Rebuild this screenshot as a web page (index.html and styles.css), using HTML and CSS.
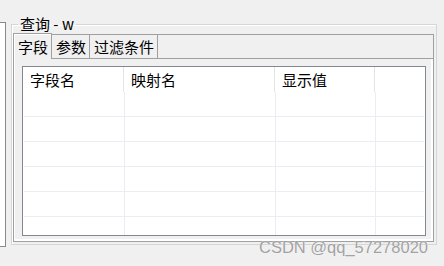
FILE: index.html
```html
<!DOCTYPE html>
<html lang="zh-CN">
<head>
    <meta charset="UTF-8">
    <title>查询 - w</title>
    <link rel="stylesheet" href="styles.css">
</head>
<body>
    <div class="window">
        <div class="side-panel"></div>

        <fieldset class="group">
            <legend>查询 - w</legend>

            <div class="tabs">
                <div class="tab-bar">
                    <div class="tab active">字段</div>
                    <div class="tab">参数</div>
                    <div class="tab">过滤条件</div>
                    <div class="tab-fill"></div>
                </div>

                <div class="tab-pane">
                    <div class="table">
                        <div class="table-head">
                            <div class="th">字段名</div>
                            <div class="th">映射名</div>
                            <div class="th">显示值</div>
                            <div class="th"></div>
                        </div>
                        <div class="table-body">
                            <div class="row"><div></div><div></div><div></div><div></div></div>
                            <div class="row"><div></div><div></div><div></div><div></div></div>
                            <div class="row"><div></div><div></div><div></div><div></div></div>
                            <div class="row"><div></div><div></div><div></div><div></div></div>
                            <div class="row"><div></div><div></div><div></div><div></div></div>
                            <div class="row"><div></div><div></div><div></div><div></div></div>
                        </div>
                    </div>
                </div>
            </div>
        </fieldset>
    </div>

    <div class="watermark">CSDN @qq_57278020</div>
</body>
</html>
```

FILE: styles.css
```css
:root {
    --bg-color: #f0f0f0;
    --frame-color: #a0a0a0;
    --table-border: #828790;
    --grid-color: #eaedf1;
    --text-color: #000000;
}

* {
    box-sizing: border-box;
}

body {
    margin: 0;
    width: 444px;
    height: 266px;
    overflow: hidden;
    background-color: var(--bg-color);
    font-family: "Noto Sans CJK SC", "Noto Sans", sans-serif;
    color: var(--text-color);
    position: relative;
}

.window {
    display: flex;
    align-items: flex-start;
    gap: 5px;
}

.side-panel {
    width: 6px;
    height: 225px;
    margin-top: 22px;
    background: #ffffff;
    border: 1px solid #8a8a8a;
    border-left: none;
}

.group {
    margin: 16px 0 0;
    width: 426px;
    padding: 1px 2px 2px 1px;
    border: 1px solid #d6d6d6;
    box-shadow: inset 1px 1px 0 #ffffff;
    min-width: 0;
}

.group legend {
    margin-left: 5px;
    padding: 0 2px;
    font-size: 15px;
    line-height: 16px;
    height: 16px;
}

.tabs {
    display: flex;
    flex-direction: column;
}

.tab-bar {
    display: flex;
    align-items: flex-end;
    height: 26px;
    font-size: 15px;
}

.tab {
    height: 25px;
    padding: 0 3px 0 4px;
    border-top: 1px solid var(--frame-color);
    border-right: 1px solid var(--frame-color);
    border-bottom: 1px solid var(--frame-color);
    line-height: 23px;
    white-space: nowrap;
}

.tab.active {
    height: 26px;
    padding-top: 1px;
    border-left: 1px solid var(--frame-color);
    border-bottom: none;
    box-shadow: inset 1px 1px 0 #ffffff;
}

.tab-fill {
    flex: 1;
    height: 25px;
    border-top: 1px solid var(--frame-color);
    border-right: 1px solid var(--frame-color);
    border-bottom: 1px solid var(--frame-color);
}

.tab-pane {
    height: 183px;
    padding: 7px 7px 5px 8px;
    border: 1px solid var(--frame-color);
    border-top: none;
    box-shadow: inset 1px 0 0 #ffffff, inset -2px -2px 0 #ffffff;
}

.table {
    height: 170px;
    background: #ffffff;
    border: 1px solid var(--table-border);
    overflow: hidden;
}

.table-head {
    display: grid;
    grid-template-columns: 101px 151px 100px 1fr;
    height: 25px;
}

.th {
    padding-left: 7px;
    font-size: 15px;
    line-height: 25px;
    border-right: 1px solid #e3e3e3;
    white-space: nowrap;
}

.th:last-child {
    border-right: none;
}

.table-body {
    margin: 0 1px;
}

.row {
    display: grid;
    grid-template-columns: 101px 151px 100px 1fr;
    height: 25px;
    border-bottom: 1px solid var(--grid-color);
}

.row div {
    border-right: 1px solid var(--grid-color);
}

.row div:last-child {
    border-right: none;
}

.watermark {
    position: absolute;
    right: 16px;
    top: 238px;
    font-family: "Liberation Sans", Arial, sans-serif;
    font-size: 16.5px;
    color: #a2a2a2;
    text-shadow: 0 0 1px #ffffff;
    white-space: nowrap;
}
```
